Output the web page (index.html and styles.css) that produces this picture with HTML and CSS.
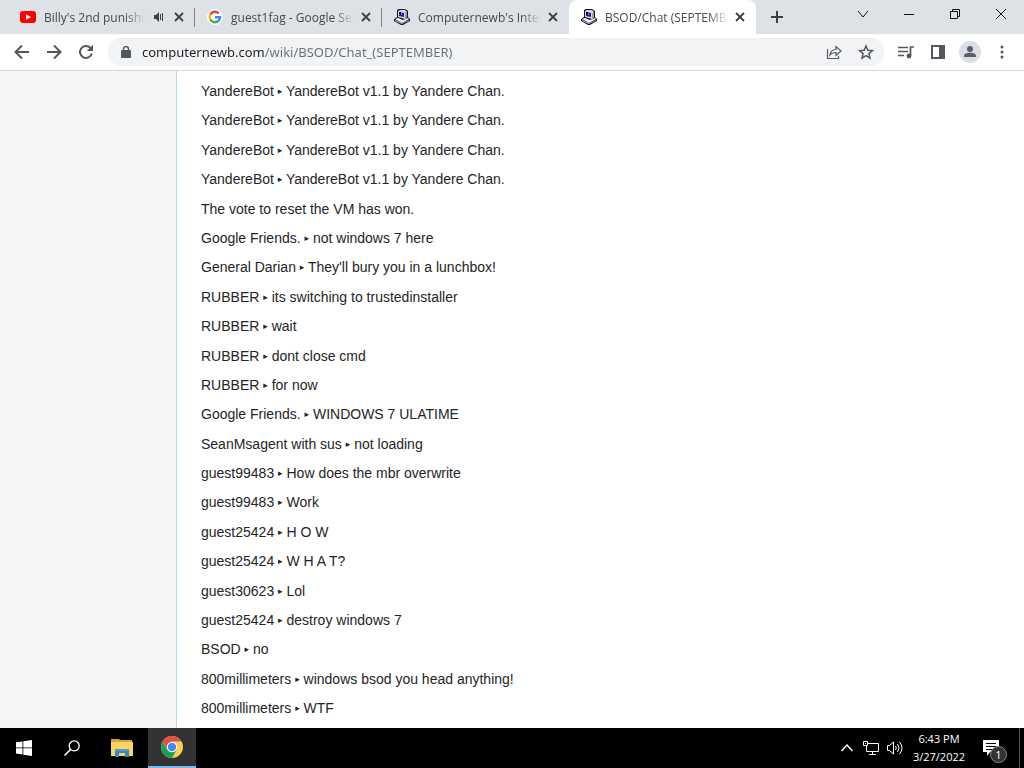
FILE: index.html
```html
<!DOCTYPE html>
<html lang="en">
<head>
<meta charset="utf-8">
<title>BSOD/Chat (SEPTEMBER)</title>
<link rel="stylesheet" href="styles.css">
</head>
<body>
<svg class="defs" aria-hidden="true">
  <symbol id="close" viewBox="0 0 16 16"><path d="M4 4l8 8M12 4l-8 8" stroke="#3c4043" stroke-width="1.8"/></symbol>
  <symbol id="computer" viewBox="0 0 16 16">
    <path d="M3 1L5 0H11L14 2V8L16 10V12L9 16H7L0 12V10L3 8V3Z" fill="#15151f"/>
    <path d="M4 2L6 1H11L13 3V8L11 10L4 8V3Z" fill="#d5d5e2"/>
    <path d="M5 3L10 4V8L5 7Z" fill="#20208c"/>
    <path d="M5 3h2v2h-2z" fill="#000034"/><path d="M7 4h1v2h-1z" fill="#8080dd"/>
    <path d="M11 4l2-1v5l-2 2z" fill="#9a9ab2"/>
    <path d="M1 10l3-1 5 2 5-2 1 1-7 4z" fill="#f4f4f9"/>
    <path d="M1 11l7 3v1l-7-3z" fill="#c4c4d0"/><path d="M8 14l7-3v1l-7 3z" fill="#9a9aaa"/>
  </symbol>
</svg>
<header class="browser">
  <div class="tabstrip">
    <div class="tabs">
      <div class="tab">
        <svg class="favicon" viewBox="0 0 16 16"><rect x="0" y="2" width="16" height="12" rx="3" fill="#f00"/><path d="M6 5.2v5.6L11 8z" fill="#fff"/></svg>
        <span class="tab-title">Billy's 2nd punishm</span>
        <svg class="audio" viewBox="0 0 12 12"><path d="M1 4h2l3-3v10L3 8H1z" fill="#3c4043"/><path d="M7.500 3v6M9.500 2v8" stroke="#3c4043"/></svg>
        <button class="close" aria-label="Close tab"><svg><use href="#close"/></svg></button>
      </div>
      <div class="tab">
        <svg class="favicon" viewBox="0 0 16 16"><circle cx="8" cy="8" r="8" fill="#fff"/><g fill="none" stroke-width="2.400"><path d="M3.300 5.500A5.200 5.200 0 0 1 11.700 4.400" stroke="#ea4335"/><path d="M3.300 10.500A5.200 5.200 0 0 1 3.300 5.500" stroke="#fbbc05"/><path d="M3.300 10.500A5.200 5.200 0 0 0 11.400 11.900" stroke="#34a853"/><path d="M11.400 11.900A5.200 5.200 0 0 0 13.100 8.200H8" stroke="#4285f4"/></g></svg>
        <span class="tab-title">guest1fag - Google Sea</span>
        <button class="close" aria-label="Close tab"><svg><use href="#close"/></svg></button>
      </div>
      <div class="tab last">
        <svg class="favicon"><use href="#computer"/></svg>
        <span class="tab-title">Computernewb's Intern</span>
        <button class="close" aria-label="Close tab"><svg><use href="#close"/></svg></button>
      </div>
      <div class="tab active">
        <svg class="favicon"><use href="#computer"/></svg>
        <span class="tab-title">BSOD/Chat (SEPTEMBE</span>
        <button class="close" aria-label="Close tab"><svg><use href="#close"/></svg></button>
      </div>
      <button class="new-tab" aria-label="New tab"><svg viewBox="0 0 14 14"><path d="M7 1v12M1 7h12" stroke="#3c4043" stroke-width="2"/></svg></button>
    </div>
    <div class="window-controls">
      <button aria-label="Search tabs"><svg viewBox="0 0 12 12"><path d="M1 3l5 6 5-6" /></svg></button>
      <button aria-label="Minimize"><svg viewBox="0 0 12 12"><path d="M1 6.500h10"/></svg></button>
      <button aria-label="Restore"><svg viewBox="0 0 12 12"><path d="M1.500 3.500h7v7h-7zM3.500 3.500v-2h7v7h-2"/></svg></button>
      <button aria-label="Close"><svg viewBox="0 0 12 12"><path d="M1 1l10 10M11 1L1 11"/></svg></button>
    </div>
  </div>
  <div class="toolbar">
    <button class="tool" aria-label="Back"><svg viewBox="0 0 16 16"><path d="M15 8H2M8 1.500L1.500 8 8 14.500"/></svg></button>
    <button class="tool" aria-label="Forward"><svg viewBox="0 0 16 16"><path d="M1 8h13M8 1.500L14.500 8 8 14.500"/></svg></button>
    <button class="tool" aria-label="Reload"><svg viewBox="0 0 16 16"><path d="M13.800 9.500A6 6 0 1 1 12.500 4"/><path d="M15 .8V7H8.800z" fill="#54575b" stroke="none"/></svg></button>
    <div class="omnibox">
      <svg class="lock" viewBox="0 0 10 12"><rect x="0" y="4" width="10" height="8" rx="1" fill="#54575b"/><path d="M2.500 5V3a2.500 2.500 0 0 1 5 0v2" fill="none" stroke="#54575b" stroke-width="1.400"/></svg>
      <input class="url" type="text" aria-label="Address" value="computernewb.com/wiki/BSOD/Chat_(SEPTEMBER)">
      <button class="tool" aria-label="Share"><svg class="thin" viewBox="0 0 16 16"><path d="M1.500 5v9.500h11V12M4 11c.5-4 2.500-5.500 6-5.500V2.500L15 7l-5 4.500V8.500C7 8.500 5.500 9 4 11z"/></svg></button>
      <button class="tool" aria-label="Bookmark"><svg class="thin" viewBox="0 0 16 16"><path d="M8 2l1.800 4.200 4.600.4-3.500 3 1.100 4.500L8 11.700l-4 2.400 1.100-4.500-3.500-3 4.600-.4z" stroke-width="1.500"/></svg></button>
    </div>
    <button class="tool" aria-label="Media"><svg viewBox="0 0 16 16"><path d="M0 3.500h10M0 7.500h10M0 11.500h6" stroke-width="1.700"/><path d="M12.500 12V3H16" stroke-width="1.700"/><circle cx="11" cy="12" r="2.400" fill="#54575b" stroke="none"/></svg></button>
    <button class="tool" aria-label="Side panel"><svg viewBox="0 0 16 16"><rect x="2" y="2" width="12" height="12"/><path d="M9 2h5v12H9z" fill="#54575b" stroke="none"/></svg></button>
    <button class="tool profile" aria-label="Profile"><svg viewBox="0 0 16 16"><g fill="#54606e" stroke="none"><circle cx="8" cy="5" r="3"/><path d="M2 13v-1c0-2.200 3-3.300 6-3.300s6 1.100 6 3.300v1z"/></g></svg></button>
    <button class="tool" aria-label="Menu"><svg viewBox="0 0 16 16"><g fill="#54575b" stroke="none"><circle cx="8" cy="3" r="1.500"/><circle cx="8" cy="8" r="1.500"/><circle cx="8" cy="13" r="1.500"/></g></svg></button>
  </div>
</header>
<div class="page">
  <aside class="side"></aside>
  <main class="content">
    <p>YandereBot <i>▸</i> YandereBot v1.1 by Yandere Chan.</p>
    <p>YandereBot <i>▸</i> YandereBot v1.1 by Yandere Chan.</p>
    <p>YandereBot <i>▸</i> YandereBot v1.1 by Yandere Chan.</p>
    <p>YandereBot <i>▸</i> YandereBot v1.1 by Yandere Chan.</p>
    <p>The vote to reset the VM has won.</p>
    <p>Google Friends. <i>▸</i> not windows 7 here</p>
    <p>General Darian <i>▸</i> They'll bury you in a lunchbox!</p>
    <p>RUBBER <i>▸</i> its switching to trustedinstaller</p>
    <p>RUBBER <i>▸</i> wait</p>
    <p>RUBBER <i>▸</i> dont close cmd</p>
    <p>RUBBER <i>▸</i> for now</p>
    <p>Google Friends. <i>▸</i> WINDOWS 7 ULATIME</p>
    <p>SeanMsagent with sus <i>▸</i> not loading</p>
    <p>guest99483 <i>▸</i> How does the mbr overwrite</p>
    <p>guest99483 <i>▸</i> Work</p>
    <p>guest25424 <i>▸</i> H O W</p>
    <p>guest25424 <i>▸</i> W H A T?</p>
    <p>guest30623 <i>▸</i> Lol</p>
    <p>guest25424 <i>▸</i> destroy windows 7</p>
    <p>BSOD <i>▸</i> no</p>
    <p>800millimeters <i>▸</i> windows bsod you head anything!</p>
    <p>800millimeters <i>▸</i> WTF</p>
  </main>
</div>
<footer class="taskbar">
  <button class="task" aria-label="Start"><svg viewBox="0 0 16 16"><path d="M0 2.300L6.500 1.400V7.500H0zM7.300 1.300L16 0V7.500H7.300zM0 8.300H6.500V14.500L0 13.600zM7.300 8.300H16V16L7.300 14.700z" fill="#fff"/></svg></button>
  <button class="task" aria-label="Search"><svg viewBox="0 0 16 16"><circle cx="10.200" cy="5.800" r="5" fill="none" stroke="#fff" stroke-width="1.300"/><path d="M6.600 9.400L.5 15.500" stroke="#fff" stroke-width="1.500"/></svg></button>
  <button class="task folder" aria-label="File Explorer"><svg viewBox="0 0 22 18"><path d="M0 0h8l1 1h12v3H0z" fill="#d9a441"/><path d="M0 3h22v14H0z" fill="#fbd462"/><path d="M4 18v-8h14v8h-4v-4H8v4z" fill="#3a86c0"/><path d="M4 10h14v2H4z" fill="#4f9bd0"/></svg></button>
  <button class="task chrome" aria-label="Google Chrome"><svg viewBox="0 0 22 22"><circle cx="11" cy="11" r="11" fill="#fcd04f"/><path d="M1.500 5.500A11 11 0 0 1 20.500 5.500H11L6.700 13.500z" fill="#de5246"/><path d="M1.500 5.500A11 11 0 0 0 11 22L15.800 13.500H6.200z" fill="#1a9f5b"/><circle cx="11" cy="11" r="5.200" fill="#fff"/><circle cx="11" cy="11" r="4.200" fill="#4687f4"/></svg></button>
  <div class="tray">
    <button class="tray-icon" aria-label="Hidden icons"><svg viewBox="0 0 16 16"><path d="M2.500 11L8 5l5.500 6" stroke-width="1.500"/></svg></button>
    <button class="tray-icon" aria-label="Network"><svg viewBox="0 0 16 16"><path d="M5 3.500h10.500v8H3.500V6M9.500 11.500v3M6 14.500h7M.5 1.500h4v4h-4zM2.500 3v1"/></svg></button>
    <button class="tray-icon" aria-label="Volume"><svg viewBox="0 0 16 16"><path d="M.5 5.500h2L6.500 2v12L2.500 10.500h-2zM8.500 6q1.500 2 0 4M10.500 4q3 4 0 8M12.500 2q5 6 0 12"/></svg></button>
    <time class="clock"><span>6:43 PM</span><span>3/27/2022</span></time>
    <button class="notify" aria-label="Notifications"><svg viewBox="0 0 16 16"><path d="M0 0h16v12H7l-3 4v-4H0z" fill="#fff"/><path d="M3 3.500h10M3 6.500h10M3 9.500h7" stroke="#000"/></svg><span class="badge">1</span></button>
  </div>
</footer>
</body>
</html>
```
FILE: styles.css
```css
* { box-sizing: border-box; }
body { margin: 0; height: 100vh; display: flex; flex-direction: column; overflow: hidden; background: #fff; font-family: "Liberation Sans", Arial, sans-serif; }
button { border: 0; padding: 0; background: none; display: flex; align-items: center; justify-content: center; font: inherit; color: inherit; }
svg { display: block; flex: none; }
.defs { position: absolute; width: 0; height: 0; }

.browser { flex: none; font-family: "Open Sans", "Noto Sans", sans-serif; }
.tabstrip { display: flex; justify-content: space-between; height: 34px; background: #dee1e6; padding-left: 8px; }
.tabs { display: flex; flex: 1; min-width: 0; }
.tab { position: relative; flex: 0 1 187px; min-width: 0; display: flex; align-items: center; padding: 0 8px 0 12px; font-size: 12px; color: #45494d; }
.tab::after { content: ""; position: absolute; right: 0; top: 8px; width: 1px; height: 19px; background: #80868b; }
.tab.last::after, .tab.active::after { display: none; }
.tab.active { background: #fff; border-radius: 8px 8px 0 0; }
.favicon { width: 16px; height: 16px; }
.tab-title { flex: 1; min-width: 0; margin: 0 4px 0 8px; overflow: hidden; white-space: nowrap; mask-image: linear-gradient(to left, transparent, #000 20px); }
.audio { width: 12px; height: 12px; margin: 0 6px 0 4px; }
.close, .close svg { width: 16px; height: 16px; }
.new-tab { width: 42px; }
.new-tab svg { width: 14px; height: 14px; }
.window-controls { display: flex; height: 28px; }
.window-controls button { width: 46px; }
.window-controls svg { width: 12px; height: 12px; fill: none; stroke: #111; }

.toolbar { display: flex; align-items: center; height: 37px; padding: 0 6px; border-bottom: 1px solid #d5d6d9; background: #fff; }
.tool { width: 32px; height: 28px; }
.tool svg { width: 16px; height: 16px; fill: none; stroke: #54575b; stroke-width: 2; }
.tool .thin { stroke-width: 1.2; }
.omnibox { flex: 1; min-width: 0; display: flex; align-items: center; height: 28px; margin: 0 6px; padding: 0 2px 0 13px; border-radius: 14px; background: #f1f3f4; }
.lock { width: 10px; height: 12px; }
.url { flex: 1; min-width: 0; height: 26px; margin-left: 11px; padding: 0; border: 0; outline: 0; font: 13px "Noto Sans", "Open Sans", sans-serif; color: transparent; background: linear-gradient(to right, #202124 122px, #6a6e73 122px); background-clip: text; }
.profile svg { width: 22px; height: 22px; padding: 3px; border-radius: 50%; background: #dbdfe5; }

.page { flex: 1; min-height: 0; display: flex; overflow: hidden; }
.side { flex: none; width: 177px; background: #f6f6f6; border-right: 1px solid #b4dbea; }
.content { flex: 1; padding: 2px 24px; font-size: 14px; line-height: 1.6; color: #252525; }
.content p { margin: 0.5em 0; }
.content i { font: 9px "DejaVu Sans", sans-serif; vertical-align: 2px; }

.taskbar { flex: none; display: flex; height: 40px; background: #000; color: #fff; font-family: "Open Sans", "Noto Sans", sans-serif; }
.task { width: 48px; }
.task svg { width: 16px; height: 16px; }
.task.folder { width: 52px; }
.task.folder svg { width: 22px; height: 18px; }
.task.chrome { background: #333; border-bottom: 2px solid #76b9ed; }
.task.chrome svg { width: 22px; height: 22px; }
.tray { display: flex; margin-left: auto; padding-right: 4px; }
.tray-icon { width: 24px; }
.tray-icon svg { width: 16px; height: 16px; fill: none; stroke: #fff; }
.clock { width: 64px; display: flex; flex-direction: column; align-items: center; justify-content: center; font-size: 11px; line-height: 18px; white-space: nowrap; }
.notify { position: relative; width: 49px; padding-right: 9px; border-right: 1px solid #555; }
.notify svg { width: 16px; height: 16px; }
.badge { position: absolute; left: 19px; top: 18px; width: 17px; height: 17px; border: 1px solid #888; border-radius: 50%; background: #333; font-size: 11px; line-height: 15px; text-align: center; }
```
